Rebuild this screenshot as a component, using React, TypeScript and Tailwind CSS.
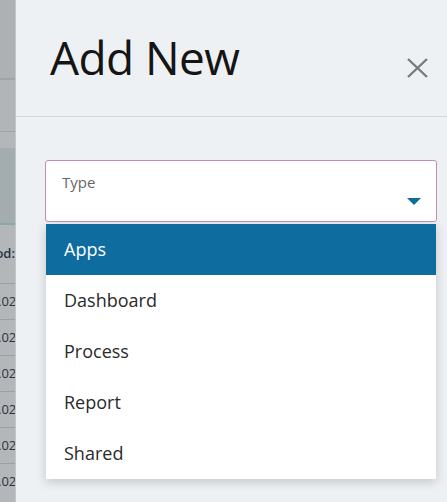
import { useState } from "react";

const options = ["Apps", "Dashboard", "Process", "Report", "Shared"];

function Backdrop() {
  const rows = [0, 1, 2, 3, 4, 5];
  return (
    <div className="flex w-[16px] shrink-0 flex-col overflow-hidden border-r border-[#c3c6c8] bg-[#b4b7b9] text-[13px] text-[#2b3440]">
      <div className="h-[78px] shrink-0 bg-[#adb1b3]" />
      <div className="h-[2px] shrink-0 bg-[#a0a4a6]" />
      <div className="h-[51px] shrink-0 bg-[#b2b5b7]" />
      <div className="h-[1px] shrink-0 bg-[#9fa3a5]" />
      <div className="h-[16px] shrink-0 bg-[#b4b7b9]" />
      <div className="h-[75px] shrink-0 bg-[#a3acae]" />
      <div className="h-[2px] shrink-0 bg-[#8ea5aa]" />
      <div className="flex h-[58px] shrink-0 items-center justify-end whitespace-nowrap font-semibold">
        od:
      </div>
      {rows.map((r) => (
        <div
          key={r}
          className="flex h-[36px] shrink-0 items-center whitespace-nowrap border-t border-[#9da0a2]"
        >
          <span className="-ml-[2px]">.02</span>
        </div>
      ))}
    </div>
  );
}

export default function App() {
  const [selected, setSelected] = useState("Apps");

  return (
    <div className="flex h-[502px] w-[447px] overflow-hidden font-['Open_Sans',sans-serif]">
      <Backdrop />
      <div className="flex-1 bg-[#eef1f4]">
        <header className="flex h-[117px] items-start justify-between border-b border-[#d4d7da] pl-[34px] pr-[19px]">
          <h1 className="pt-[26px] text-[46px] leading-[63px] tracking-[-0.6px] text-[#151515]">
            Add New
          </h1>
          <button type="button" className="mt-[58px] text-[#7a7a7a]" aria-label="Close">
            <svg width="21" height="20" viewBox="0 0 21 20" fill="none">
              <path d="M1 1L20 19M20 1L1 19" stroke="currentColor" strokeWidth="2.4" />
            </svg>
          </button>
        </header>

        <div className="pl-[29px] pt-[43px]">
          <div className="relative w-[392px]">
            <div className="relative h-[62px] rounded-[3px] border border-[#c48db5] bg-white pl-[16px] pt-[9px]">
              <span className="text-[15px] leading-[20px] text-[#666666]">Type</span>
              <svg
                className="absolute bottom-[16px] right-[15px]"
                width="14"
                height="7"
                viewBox="0 0 14 7"
              >
                <path d="M0 0H14L7 7Z" fill="#0e6c9f" />
              </svg>
            </div>

            <ul className="absolute left-[1px] right-[1px] top-[64px] bg-white shadow-[0_3px_10px_rgba(0,0,0,0.18)]">
              {options.map((opt) => (
                <li
                  key={opt}
                  onClick={() => setSelected(opt)}
                  className={`flex h-[51px] cursor-pointer items-center pl-[18px] text-[18px] ${
                    selected === opt ? "bg-[#0e6c9f] text-white" : "text-[#2a2a2a]"
                  }`}
                >
                  {opt}
                </li>
              ))}
            </ul>
          </div>
        </div>
      </div>
    </div>
  );
}
